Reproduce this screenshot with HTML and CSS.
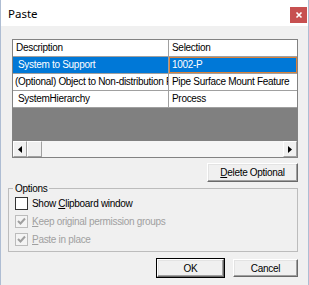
FILE: index.html
```html
<!DOCTYPE html>
<html lang="en">
<head>
    <meta charset="UTF-8">
    <title>Paste</title>
    <link rel="stylesheet" href="styles.css">
</head>
<body>
    <div class="window">
        <div class="titlebar">
            <span class="title">Paste</span>
            <span class="close">
                <svg width="16" height="16" viewBox="0 0 16 16">
                    <path d="M5.5 5.5 L10.5 10.5 M10.5 5.5 L5.5 10.5" stroke="#fff" stroke-width="1.6"/>
                </svg>
            </span>
        </div>

        <div class="content">
            <div class="grid">
                <div class="row head">
                    <div class="cell c1 pad3">Description</div>
                    <div class="cell c2">Selection</div>
                </div>
                <div class="row selected">
                    <div class="cell c1">System to Support</div>
                    <div class="cell c2 focus">1002-P</div>
                </div>
                <div class="row">
                    <div class="cell c1 pad2">(Optional) Object to Non-distribution Feature</div>
                    <div class="cell c2">Pipe Surface Mount Feature</div>
                </div>
                <div class="row">
                    <div class="cell c1">SystemHierarchy</div>
                    <div class="cell c2">Process</div>
                </div>
                <div class="empty"></div>
                <div class="hscroll">
                    <div class="arrow">
                        <svg width="4" height="7" viewBox="0 0 4 7"><path d="M4 0 L0 3.5 L4 7 Z" fill="#000"/></svg>
                    </div>
                    <div class="thumb"></div>
                    <div class="track"></div>
                    <div class="arrow">
                        <svg width="4" height="7" viewBox="0 0 4 7"><path d="M0 0 L4 3.5 L0 7 Z" fill="#000"/></svg>
                    </div>
                </div>
            </div>

            <button class="btn delete-btn"><u>D</u>elete Optional</button>

            <fieldset class="options">
                <legend>Options</legend>
                <div class="check-row">
                    <span class="box"></span>
                    <span>Show <u>C</u>lipboard window</span>
                </div>
                <div class="check-row disabled">
                    <span class="box checked">
                        <svg width="9" height="9" viewBox="0 0 9 9"><path d="M1 4 L3.5 6.5 L8 1.5" stroke="#a0a0a0" stroke-width="2" fill="none"/></svg>
                    </span>
                    <span><u>K</u>eep original permission groups</span>
                </div>
                <div class="check-row disabled">
                    <span class="box checked">
                        <svg width="9" height="9" viewBox="0 0 9 9"><path d="M1 4 L3.5 6.5 L8 1.5" stroke="#a0a0a0" stroke-width="2" fill="none"/></svg>
                    </span>
                    <span><u>P</u>aste in place</span>
                </div>
            </fieldset>

            <div class="footer">
                <button class="btn ok-btn">OK</button>
                <button class="btn cancel-btn">Cancel</button>
            </div>
        </div>
    </div>
</body>
</html>
```

FILE: styles.css
```css
body {
    margin: 0;
    background-color: #f0f0f0;
    font-family: "Liberation Sans", Arial, sans-serif;
    font-size: 10px;
    letter-spacing: -0.3px;
    color: #000;
}

.window {
    width: 309px;
    height: 285px;
    box-sizing: border-box;
    border-left: 1px solid #aebdd3;
    border-right: 1px solid #aebdd3;
    display: flex;
    flex-direction: column;
}

.titlebar {
    height: 26px;
    flex-shrink: 0;
    background-color: #fff;
    display: flex;
    justify-content: space-between;
    padding: 0 1px 0 7px;
}

.title {
    font-family: "Noto Sans", sans-serif;
    font-size: 11.5px;
    letter-spacing: 0;
    line-height: 26px;
    padding-top: 1px;
}

.close {
    width: 17px;
    height: 16px;
    margin-top: 7px;
    background-color: #c75050;
    display: flex;
    justify-content: center;
    align-items: center;
}

.content {
    flex: 1;
    padding: 13px 10px 0 7px;
    display: flex;
    flex-direction: column;
}

/* data grid */
.grid {
    margin-left: 4px;
    height: 119px;
    box-sizing: border-box;
    border: 1px solid #828282;
    display: flex;
    flex-direction: column;
}

.row {
    display: flex;
    height: 17px;
    flex-shrink: 0;
    box-sizing: border-box;
    background-color: #fff;
    border-bottom: 1px solid #a0a0a0;
}

.row.selected {
    background-color: #0078d7;
    color: #fff;
}

.cell {
    line-height: 16px;
    white-space: nowrap;
    overflow: hidden;
    box-sizing: border-box;
}

.c1 {
    width: 156px;
    padding-left: 5px;
    border-right: 1px solid #a0a0a0;
}

.c1.pad3 {
    padding-left: 3px;
}

.c1.pad2 {
    padding-left: 2px;
}

.c2 {
    flex: 1;
    padding-left: 3px;
}

.c2.focus {
    border: 1px solid #d8823c;
    line-height: 14px;
    padding-left: 2px;
}

.empty {
    flex: 1;
    background-color: #808080;
}

.hscroll {
    height: 16px;
    flex-shrink: 0;
    display: flex;
    background-color: #f5f5f5;
}

.arrow,
.thumb {
    width: 14px;
    box-sizing: border-box;
    border: 1px solid;
    border-color: #fff #a0a0a0 #a0a0a0 #fff;
    background-color: #f0f0f0;
    display: flex;
    justify-content: center;
    align-items: center;
}

.thumb {
    width: 15px;
}

.track {
    flex: 1;
}

/* buttons */
.btn {
    font-family: "Liberation Sans", Arial, sans-serif;
    font-size: 10px;
    letter-spacing: -0.3px;
    color: #000;
    background-color: #f0f0f0;
    border: 1px solid;
    border-color: #fff #696969 #696969 #fff;
    box-shadow: inset -1px -1px #a0a0a0, inset 1px 1px #e3e3e3;
    padding: 0;
}

.delete-btn {
    align-self: flex-end;
    width: 91px;
    height: 19px;
    margin-top: 5px;
}

/* options group */
.options {
    margin: 1px 0 0 0;
    padding: 0 0 3px 6px;
    border: 1px solid #bcbcbc;
    min-width: 0;
}

.options legend {
    margin-left: -2px;
    padding: 0 2px;
    line-height: 11px;
}

.check-row {
    height: 18px;
    display: flex;
    align-items: center;
    gap: 4px;
}

.check-row.disabled {
    color: #a0a0a0;
}

.box {
    width: 13px;
    height: 13px;
    box-sizing: border-box;
    border: 1px solid #333;
    background-color: #fff;
    display: flex;
    justify-content: center;
    align-items: center;
}

.box.checked {
    border-color: #bcbcbc;
    background-color: #f4f4f4;
}

.footer {
    display: flex;
    justify-content: flex-end;
    gap: 9px;
    margin-top: 7px;
}

.ok-btn {
    width: 67px;
    height: 18px;
    outline: 1px solid #000;
    outline-offset: 0;
}

.cancel-btn {
    width: 65px;
    height: 18px;
}
```
